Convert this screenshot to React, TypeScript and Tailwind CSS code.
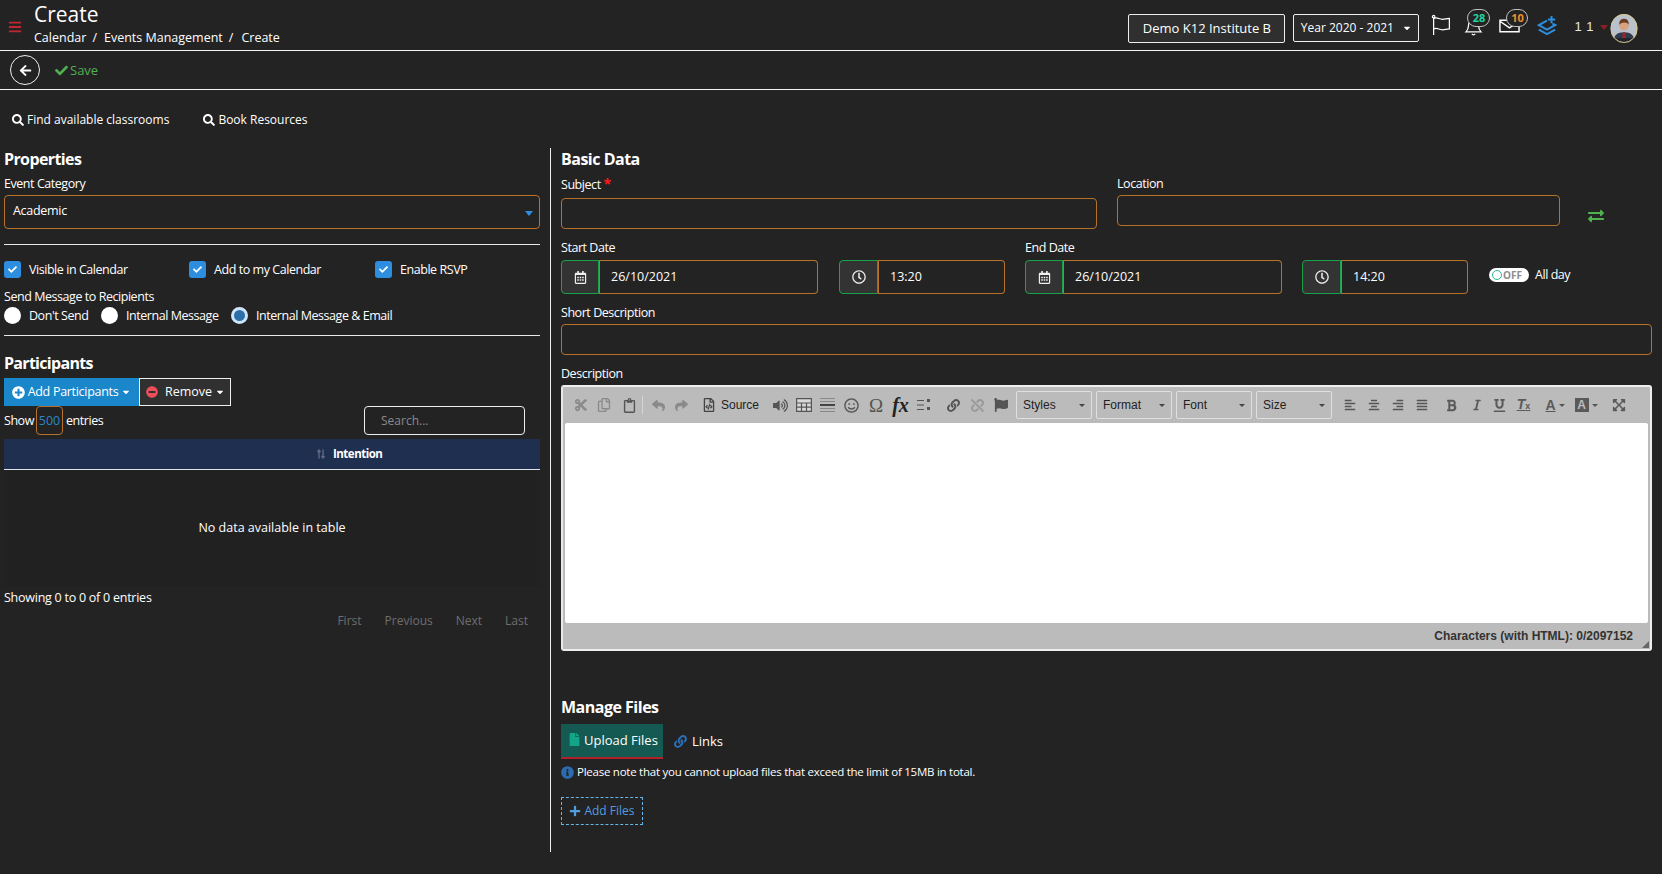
import React from "react";
import {
  FaSearch, FaCheck, FaArrowLeft, FaPlusCircle, FaMinusCircle, FaCaretDown, FaExchangeAlt, FaRegClock, FaRegCalendarAlt,
  FaFile, FaLink, FaInfoCircle, FaPlus, FaCut, FaRegCopy, FaRegClipboard, FaReply, FaShare, FaVolumeUp,
  FaRegSmile, FaFlag, FaBold, FaItalic, FaUnderline, FaAlignLeft, FaAlignCenter, FaAlignRight, FaAlignJustify,
  FaExpandArrowsAlt, FaUnlink, FaBars, FaRegFileCode,
} from "react-icons/fa";

const orange = "border border-[#b8712a] rounded-[4px]";

function Check({ label, w }: { label: string; w: string }) {
  return (
    <div className={`flex items-center gap-2 ${w}`}>
      <span className="w-[17px] h-[17px] rounded-[3px] bg-[#2d8ee0] flex items-center justify-center text-white">
        <FaCheck size={9} />
      </span>
      <span>{label}</span>
    </div>
  );
}

function Radio({ label, w, on }: { label: string; w: string; on?: boolean }) {
  return (
    <div className={`flex items-center gap-2 ${w}`}>
      {on ? (
        <span className="w-[17px] h-[17px] rounded-full bg-[#2c6fa8] border-[3px] border-[#cfe6fa]" />
      ) : (
        <span className="w-[17px] h-[17px] rounded-full bg-white" />
      )}
      <span>{label}</span>
    </div>
  );
}

function DateGroup({ w, addon, value, icon }: { w: string; addon: string; value: string; icon: React.ReactNode }) {
  return (
    <div className={`flex h-[34px] ${w}`}>
      <div className={`${addon} bg-[#333333] border border-[#16a34a] rounded-l-[4px] flex items-center justify-center text-[#eeeeee] shrink-0`}>
        {icon}
      </div>
      <div className="flex-1 border border-l-0 border-[#b8712a] rounded-r-[4px] flex items-center pl-3 text-[12.5px] tracking-normal text-white relative">
        <span className="absolute left-0 top-0 bottom-0 w-px bg-[#b8712a]" />
        {value}
      </div>
    </div>
  );
}

function Sel({ label, w }: { label: string; w: string }) {
  return (
    <div className={`${w} h-[28px] border border-[#e0e0e0] rounded-[2px] flex items-center justify-between px-[6px] text-[12px] text-[#222222] shrink-0`}>
      <span>{label}</span>
      <span className="w-0 h-0 border-x-[3px] border-x-transparent border-t-[3px] border-t-[#444444]" />
    </div>
  );
}

function Tb({ w, children, cls }: { w: string; children: React.ReactNode; cls?: string }) {
  return <span className={`${w} flex items-center justify-center shrink-0 ${cls ?? "text-[#8a8a8a]"}`}>{children}</span>;
}

export default function App() {
  return (
    <div className="w-[1662px] h-[874px] overflow-hidden bg-[#242324] text-white text-[12.5px] tracking-[-0.45px] leading-[18px]" style={{ fontFamily: "'Open Sans', sans-serif" }}>
      {/* header */}
      <header className="h-[51px] border-b border-[#f5f5f5] flex items-center relative tracking-normal">
        <FaBars size={14} className="text-[#c0272d] ml-2 mt-[4px] shrink-0" />
        <div className="ml-[12px] flex flex-col -mt-[2px]">
          <div className="text-[21px] leading-[27px] text-white">Create</div>
          <div className="flex text-[12.5px] leading-[18px] text-white mt-[1px]">
            <span>Calendar</span>
            <span className="ml-[6px] mr-[7px]">/</span>
            <span>Events Management</span>
            <span className="ml-[6px] mr-[8px]">/</span>
            <span>Create</span>
          </div>
        </div>
        <div className="ml-auto flex items-center mt-[6px]">
          <div className="w-[157px] h-[29px] border border-[#eeeeee] rounded-[2px] bg-[#2f2f2f] flex items-center justify-center text-[13px]">Demo K12 Institute B</div>
          <div className="ml-2 w-[126px] h-[28px] border border-[#eeeeee] rounded-[2px] bg-[#2a2a2a] flex items-center justify-center gap-2 text-[12px]">
            Year 2020 - 2021 <FaCaretDown size={10} />
          </div>
          <svg width="21" height="22" viewBox="0 0 24 25" fill="none" stroke="#ffffff" strokeWidth="1.4" className="ml-[12px] -mt-[7px]">
            <circle cx="3" cy="3" r="1.4" />
            <path d="M3 4v20M3 5c4-2 6 1 10 1 3 0 5-1 8-1v12c-3 0-5 1-8 1-4 0-6-3-10-1" />
          </svg>
          <div className="relative ml-[12px] w-[26px] h-[27px] -mt-[12px]">
            <svg width="19" height="20" viewBox="0 0 22 24" fill="none" stroke="#ffffff" strokeWidth="1.5" className="absolute left-0 bottom-0">
              <path d="M2 19c2-2 3-3 3-8a6 6 0 0 1 12 0c0 5 1 6 3 8zM9 21.5c1 1.4 3 1.4 4 0" />
            </svg>
            <span className="absolute left-[3px] top-0 w-[23px] h-[18px] rounded-full border border-[#c0c0c0] bg-[#242324] text-[#22d3a0] text-[11px] font-bold flex items-center justify-center">28</span>
          </div>
          <div className="relative ml-[9px] w-[29px] h-[27px] -mt-[12px]">
            <svg width="21" height="14" viewBox="0 0 22 14" fill="none" stroke="#ffffff" strokeWidth="1.5" className="absolute left-0 bottom-[3px]">
              <path d="M1 1h20v12H1zM1 2l10 7 10-7" />
            </svg>
            <span className="absolute left-[7px] top-0 w-[22px] h-[18px] rounded-full border border-[#c0c0c0] bg-[#242324] text-[#e8912d] text-[11px] font-bold flex items-center justify-center">10</span>
          </div>
          <svg width="20" height="19" viewBox="0 0 22 21" fill="none" stroke="#2d8ee0" strokeWidth="2.2" className="ml-[9px] -mt-[6px]">
            <path d="M16 0v8M12 4h8M11 5L2 10l9 5 9-5-3-1.500M2 15l9 5 9-5" />
          </svg>
          <span className="ml-[17px] text-[13px] leading-[18px] text-[#e8e8e8] tracking-[0.5px] -mt-[3px]" style={{ fontFamily: "'Liberation Sans', sans-serif" }}>1 1</span>
          <span className="ml-[6px] -mt-[2px] w-0 h-0 border-x-[4px] border-x-transparent border-t-[5px] border-t-[#8b1d24]" />
          <svg width="28" height="29" viewBox="0 0 28 30" className="ml-[2px] mr-[24px]">
            <defs><clipPath id="av"><ellipse cx="14" cy="15" rx="14" ry="15" /></clipPath></defs>
            <g clipPath="url(#av)">
              <rect width="28" height="30" fill="#b9c2cc" />
              <path d="M3 30c0-8 4-11 11-11s11 3 11 11z" fill="#2f3c4e" />
              <path d="M12.800 19h2.400l.6 8h-3.600z" fill="#a4262c" />
              <circle cx="14" cy="12" r="5" fill="#d9a27e" />
              <path d="M9 11c0-5 3-6 5-6s5 1 5 6c-2-3-7-3-10 0z" fill="#6b3d22" />
              <rect y="25" width="28" height="5" fill="#20242b" />
            </g>
            <ellipse cx="14" cy="15" rx="13.500" ry="14.500" fill="none" stroke="#d8c48a" strokeWidth="1" />
          </svg>
        </div>
      </header>

      {/* action bar */}
      <div className="h-[39px] border-b border-[#f5f5f5] flex items-center tracking-normal">
        <div className="ml-[10px] w-[30px] h-[30px] rounded-full border border-[#f0f0f0] flex items-center justify-center text-white">
          <FaArrowLeft size={13} />
        </div>
        <FaCheck size={13} className="ml-[15px] text-[#4fb14f]" />
        <span className="ml-[2px] text-[13px] text-[#4fb14f]">Save</span>
      </div>

      {/* links */}
      <div className="h-[58px] flex items-center pl-[12px] pt-[1px] text-[12px] tracking-normal">
        <FaSearch size={12} className="mr-[3px]" />
        <span>Find available classrooms</span>
        <FaSearch size={12} className="ml-[34px] mr-[3px]" />
        <span>Book Resources</span>
      </div>

      {/* body */}
      <div className="flex pl-1 pr-[10px]">
        {/* left */}
        <div className="w-[536px] shrink-0">
          <h2 className="text-[16px] leading-[22px] font-bold tracking-[-0.6px]">Properties</h2>
          <div className="mt-[5px] h-[18px]">Event Category</div>
          <div className={`mt-[2px] h-[34px] ${orange} flex items-center justify-between pl-[8px] pr-[6px]`}>
            <span className="-mt-[2px] tracking-[-0.3px]">Academic</span>
            <span className="mt-[3px] w-0 h-0 border-x-[4px] border-x-transparent border-t-[5px] border-t-[#2d8ee0]" />
          </div>
          <div className="mt-[15px] h-px bg-[#e8e8e8]" />
          <div className="mt-[16px] flex h-[17px]">
            <Check label="Visible in Calendar" w="w-[185px]" />
            <Check label="Add to my Calendar" w="w-[186px]" />
            <Check label="Enable RSVP" w="w-[150px]" />
          </div>
          <div className="mt-[10px] h-[18px]">Send Message to Recipients</div>
          <div className="mt-[1px] flex h-[17px]">
            <Radio label="Don't Send" w="w-[97px]" />
            <Radio label="Internal Message" w="w-[130px]" />
            <Radio label="Internal Message & Email" w="w-[200px]" on />
          </div>
          <div className="mt-[11px] h-px bg-[#e8e8e8]" />
          <h2 className="mt-[16px] text-[16px] leading-[22px] font-bold tracking-[-0.7px]">Participants</h2>
          <div className="mt-[4px] flex h-[28px]">
            <div className="w-[135px] bg-[#1b87cb] flex items-center justify-center gap-[3px] tracking-[-0.3px]">
              <FaPlusCircle size={13} /> <span>Add Participants</span> <FaCaretDown size={10} />
            </div>
            <div className="w-[92px] bg-[#303030] border border-[#eeeeee] flex items-center justify-center gap-[3px] tracking-normal pl-[1px]">
              <FaMinusCircle size={12} className="text-[#ee4d5a] mr-[4px]" /> <span>Remove</span> <FaCaretDown size={10} />
            </div>
          </div>
          <div className="flex h-[29px] items-center">
            <span className="w-[32px]">Show</span>
            <span className="w-[27px] h-[29px] border border-[#b8712a] rounded-[4px] flex items-center justify-center text-[#2a86c8] tracking-normal">500</span>
            <span className="ml-[3px]">entries</span>
            <div className="ml-auto mr-[15px] w-[161px] h-[29px] border border-[#eeeeee] rounded-[4px] flex items-center pl-[16px] pt-[1px] text-[12px] tracking-normal text-[#8a8a8a]">Search...</div>
          </div>
          <div className="mt-[4px] h-[31px] bg-[#1f2f50] border-b border-[#dfe3ea] flex items-center pl-[313px]">
            <svg width="8" height="10" viewBox="0 0 8 10" fill="none" stroke="#5c6a85" strokeWidth="1.4" className="mr-[8px] shrink-0">
              <path d="M2 9.500V1M.5 3L2 1l1.500 2M6 .5V9M4.500 7L6 9l1.500-2" />
            </svg>
            <span className="font-bold text-[11.5px] tracking-[-0.5px]">Intention</span>
          </div>
          <div className="h-[116px] bg-[#222122] flex items-center justify-center tracking-normal">No data available in table</div>
          <div className="mt-[3px] h-[18px] tracking-[-0.25px]">Showing 0 to 0 of 0 entries</div>
          <div className="mt-[5px] h-[18px] flex justify-end pr-[12px] text-[12px] tracking-normal text-[#6e6e6e] gap-[23px]">
            <span>First</span><span>Previous</span><span>Next</span><span>Last</span>
          </div>
        </div>

        {/* right */}
        <div className="ml-[10px] flex-1 border-l border-[#eeeeee] pl-[10px] h-[704px]">
          <h2 className="text-[16px] leading-[22px] font-bold tracking-[-0.5px]">Basic Data</h2>
          <div className="flex mt-[5px]">
            <div className="w-[536px]">
              <div className="h-[18px]">Subject <span className="text-[#ff1a1a] font-bold text-[14px]">*</span></div>
              <div className={`mt-[5px] h-[31px] ${orange}`} />
            </div>
            <div className="ml-[20px] w-[443px]">
              <div className="h-[18px]">Location</div>
              <div className={`mt-[2px] h-[31px] ${orange}`} />
            </div>
            <FaExchangeAlt size={16} className="ml-[28px] mt-[33px] text-[#4fb14f]" />
          </div>
          <div className="flex mt-[10px]">
            <div className="w-[278px]">
              <div className="h-[18px]">Start Date</div>
            </div>
            <div className="w-[186px]" />
            <div className="h-[18px]">End Date</div>
          </div>
          <div className="flex items-center mt-[3px]">
            <DateGroup w="w-[257px]" addon="w-[38px]" value="26/10/2021" icon={<FaRegCalendarAlt size={13} />} />
            <DateGroup w="w-[166px] ml-[21px]" addon="w-[39px]" value="13:20" icon={<FaRegClock size={14} />} />
            <DateGroup w="w-[257px] ml-[20px]" addon="w-[38px]" value="26/10/2021" icon={<FaRegCalendarAlt size={13} />} />
            <DateGroup w="w-[166px] ml-[20px]" addon="w-[39px]" value="14:20" icon={<FaRegClock size={14} />} />
            <div className="ml-[21px] -mt-[4px] w-[40px] h-[14px] rounded-full bg-white flex items-center pl-[3px] shrink-0 tracking-normal">
              <span className="w-[10px] h-[10px] rounded-full border border-[#25b89a]" />
              <span className="ml-[1px] text-[10px] leading-[14px] font-bold text-[#8d8d8d]">OFF</span>
            </div>
            <span className="ml-[6px] -mt-[4px]">All day</span>
          </div>
          <div className="mt-[10px] h-[18px]">Short Description</div>
          <div className={`mt-[2px] h-[31px] ${orange}`} />
          <div className="mt-[10px] h-[18px]">Description</div>

          {/* editor */}
          <div className="mt-[2px] h-[266px] border-2 border-[#eeeeee] rounded-[3px] border-l-[#e8e8e8] flex flex-col bg-[#bbbbbb] tracking-normal" style={{ fontFamily: "'Liberation Sans', sans-serif" }}>
            <div className="h-[36px] flex items-center pl-[7px] shrink-0">
              <Tb w="w-[22px]"><FaCut size={14} /></Tb>
              <Tb w="w-[24px]"><FaRegCopy size={14} /></Tb>
              <Tb w="w-[26px]" cls="text-[#555555]"><FaRegClipboard size={15} /></Tb>
              <span className="w-px h-[18px] bg-[#d5d5d5] mr-[3px]" />
              <Tb w="w-[24px]"><FaReply size={13} /></Tb>
              <Tb w="w-[22px]"><FaShare size={13} /></Tb>
              <Tb w="w-[22px] ml-[6px]" cls="text-[#444444]"><FaRegFileCode size={14} /></Tb>
              <span className="text-[12px] text-[#222222] ml-[1px] mr-[9px]">Source</span>
              <Tb w="w-[24px]" cls="text-[#555555]"><FaVolumeUp size={15} /></Tb>
              <Tb w="w-[24px]">
                <svg width="16" height="14" viewBox="0 0 16 14" fill="#d8d8d8" stroke="#555555" strokeWidth="1.2">
                  <path d="M.6.6h14.800v12.800H.6zM.6 5h14.800M.6 9.200h14.800M5.500 5v8.400M10.500 5v8.400" />
                </svg>
              </Tb>
              <Tb w="w-[23px]" cls="text-[#666666]">
                <span className="flex flex-col gap-[2px] w-[15px]">
                  <span className="h-px bg-[#888888]" /><span className="h-px bg-[#888888]" /><span className="h-[2px] bg-[#444444]" /><span className="h-px bg-[#888888]" /><span className="h-px bg-[#888888]" />
                </span>
              </Tb>
              <Tb w="w-[25px]" cls="text-[#555555]"><FaRegSmile size={15} /></Tb>
              <Tb w="w-[24px]" cls="text-[#555555]"><span className="text-[19px] leading-none" style={{ fontFamily: "'Liberation Serif', serif" }}>Ω</span></Tb>
              <Tb w="w-[25px]" cls="text-[#222222]"><span className="text-[20px] leading-none italic font-bold" style={{ fontFamily: "'Liberation Serif', serif" }}>fx</span></Tb>
              <Tb w="w-[22px]" cls="text-[#555555]">
                <svg width="14" height="12" viewBox="0 0 14 12" fill="none" stroke="#555555">
                  <path d="M0 1.500h7M0 6h7M0 10.500h7" /><rect x="10" y="0" width="3" height="3" fill="#555555" stroke="none" /><rect x="10" y="8" width="3" height="3" fill="#555555" stroke="none" />
                </svg>
              </Tb>
              <Tb w="w-[28px] ml-[4px]" cls="text-[#555555]"><FaLink size={13} /></Tb>
              <Tb w="w-[20px]" cls="text-[#999999]"><FaUnlink size={13} /></Tb>
              <Tb w="w-[28px]" cls="text-[#555555]"><FaFlag size={14} /></Tb>
              <div className="flex ml-[1px] gap-[4px]">
                <Sel label="Styles" w="w-[76px]" />
                <Sel label="Format" w="w-[76px]" />
                <Sel label="Font" w="w-[76px]" />
                <Sel label="Size" w="w-[76px]" />
              </div>
              <div className="flex ml-[6px]">
                <Tb w="w-[24px]" cls="text-[#555555]"><FaAlignLeft size={12} /></Tb>
                <Tb w="w-[24px]" cls="text-[#555555]"><FaAlignCenter size={12} /></Tb>
                <Tb w="w-[24px]" cls="text-[#555555]"><FaAlignRight size={12} /></Tb>
                <Tb w="w-[24px]" cls="text-[#555555]"><FaAlignJustify size={12} /></Tb>
                <Tb w="w-[29px] ml-[3px]" cls="text-[#5a5a5a]"><FaBold size={13} /></Tb>
                <Tb w="w-[21px]" cls="text-[#5a5a5a]"><FaItalic size={12} /></Tb>
                <Tb w="w-[25px]" cls="text-[#5a5a5a]"><FaUnderline size={13} /></Tb>
                <Tb w="w-[23px]" cls="text-[#5a5a5a]"><span className="text-[14px] italic font-bold underline">T<span className="text-[9px] not-italic">x</span></span></Tb>
                <Tb w="w-[32px] ml-[4px]" cls="text-[#5a5a5a]"><span className="text-[14px] font-bold underline mr-[3px]">A</span><span className="w-0 h-0 border-x-[3px] border-x-transparent border-t-[3px] border-t-[#555555]" /></Tb>
                <Tb w="w-[30px]" cls="text-[#5a5a5a]"><span className="w-[14px] h-[14px] bg-[#5a5a5a] text-[#bbbbbb] text-[12px] font-bold flex items-center justify-center mr-[3px]">A</span><span className="w-0 h-0 border-x-[3px] border-x-transparent border-t-[3px] border-t-[#555555]" /></Tb>
                <Tb w="w-[30px] ml-[3px]" cls="text-[#5a5a5a]"><FaExpandArrowsAlt size={14} /></Tb>
              </div>
            </div>
            <div className="flex-1 bg-white mx-[2px] rounded-[2px]" />
            <div className="h-[26px] flex items-center justify-end pr-[17px] text-[12px] font-bold text-[#333333] relative shrink-0">
              Characters (with HTML): 0/2097152
              <span className="absolute right-[1px] bottom-[1px] w-0 h-0 border-l-[7px] border-l-transparent border-b-[7px] border-b-[#666666]" />
            </div>
          </div>

          <h2 className="mt-[45px] text-[16px] leading-[22px] font-bold tracking-[-0.5px]">Manage Files</h2>
          <div className="mt-[6px] flex h-[35px] tracking-normal">
            <div className="w-[102px] bg-[#145a52] border-b-2 border-[#b0212b] flex items-center pl-[7px] pb-[2px] text-[13px] whitespace-nowrap">
              <FaFile size={13} className="text-[#12a588] mr-[3px] shrink-0" />
              Upload Files
            </div>
            <div className="flex items-center ml-[11px] text-[13px] pb-[1px]">
              <FaLink size={13} className="text-[#2a6fb8] mr-[5px]" />
              Links
            </div>
          </div>
          <div className="mt-[4px] flex items-center h-[18px] text-[11.5px] tracking-[-0.25px]">
            <FaInfoCircle size={13} className="text-[#2b6cb0] mr-[3px]" />
            Please note that you cannot upload files that exceed the limit of 15MB in total.
          </div>
          <div className="mt-[16px] w-[82px] h-[28px] border border-dashed border-[#69b7e8] flex items-center justify-center text-[12px] text-[#4f9fe0] gap-[3px] tracking-normal">
            <FaPlus size={12} /> Add Files
          </div>
        </div>
      </div>
    </div>
  );
}
